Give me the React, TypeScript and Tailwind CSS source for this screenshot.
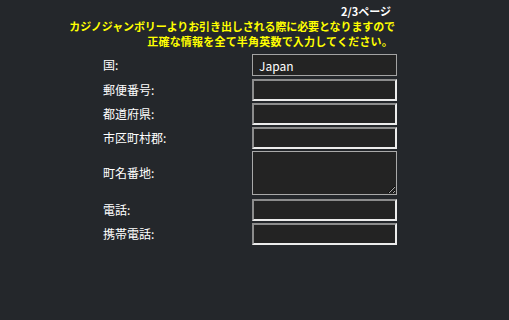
const rows = [
  { label: "郵便番号", mt: "mt-[3px]" },
  { label: "都道府県", mt: "mt-[2px]" },
  { label: "市区町村郡", mt: "mt-[2px]" },
];

const phones = [
  { label: "電話", mt: "mt-[4px]" },
  { label: "携帯電話", mt: "mt-[2px]" },
];

function Label({ text }: { text: string }) {
  return (
    <span className="w-[149px] text-[12px] text-white">
      {text}:
    </span>
  );
}

function InsetInput() {
  return (
    <input
      type="text"
      className="h-[22px] w-[145px] border-2 border-t-[#8c8c8c] border-l-[#8c8c8c] border-b-[#ececec] border-r-[#ececec] bg-[#232323] px-1 text-[12px] text-white outline-none"
    />
  );
}

export default function App() {
  return (
    <div
      className="h-[320px] w-[509px] bg-[#24272b] pt-[5px]"
      style={{ fontFamily: '"Noto Sans CJK JP", "Noto Sans", sans-serif' }}
    >
      <div className="ml-[60px] w-[335px] text-right font-bold">
        <p className="pr-[4px] text-[11px] leading-[13px] text-white">2/3ページ</p>
        <p className="mt-[1px] text-[11px] leading-[15px] tracking-[-0.1px] text-[#ffff00]">
          カジノジャンボリーよりお引き出しされる際に必要となりますので
        </p>
        <p className="pr-[2px] text-[11px] leading-[15px] tracking-[0.2px] text-[#ffff00]">
          正確な情報を全て半角英数で入力してください。
        </p>
      </div>

      <div className="ml-[103px] mt-[5px] flex flex-col">
        <div className="flex items-center">
          <Label text="国" />
          <input
            type="text"
            defaultValue="Japan"
            className="h-[22px] w-[145px] border border-[#a3a3a3] bg-[#232323] px-[6px] text-[12px] text-white outline-none"
          />
        </div>
        {rows.map((r) => (
          <div key={r.label} className={`flex items-center ${r.mt}`}>
            <Label text={r.label} />
            <InsetInput />
          </div>
        ))}
        <div className="mt-[2px] flex items-center">
          <Label text="町名番地" />
          <textarea className="h-[44px] w-[145px] resize-y border border-[#a9a9a9] bg-[#232323] text-[12px] text-white outline-none" />
        </div>
        {phones.map((r) => (
          <div key={r.label} className={`flex items-center ${r.mt}`}>
            <Label text={r.label} />
            <InsetInput />
          </div>
        ))}
      </div>
    </div>
  );
}
